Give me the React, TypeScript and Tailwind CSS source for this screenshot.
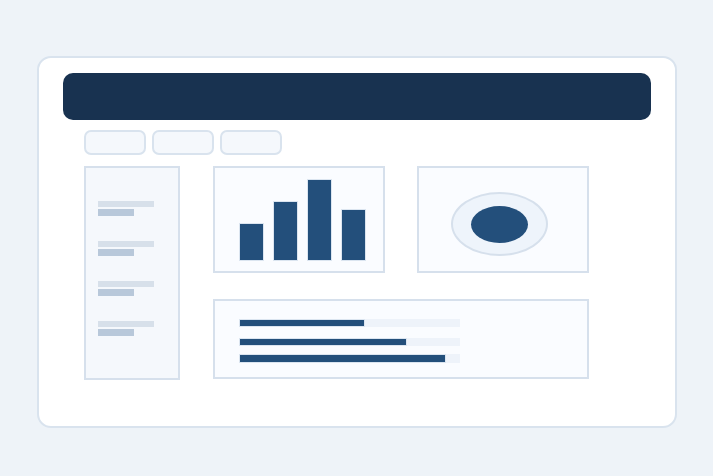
const bars = [38, 60, 82, 52];
const progress = [
  { fill: 126, h: 'h-[8px]', mt: 'mt-0' },
  { fill: 168, h: 'h-[8px]', mt: 'mt-[11px]' },
  { fill: 207, h: 'h-[9px]', mt: 'mt-[8px]' },
];

export default function App() {
  return (
    <div className="w-[713px] h-[476px] bg-[#eef3f8] pt-[56px] pl-[37px]">
      <div className="w-[640px] h-[372px] bg-white border-2 border-[#d9e3ee] rounded-[14px] px-[24px] pt-[15px]">
        {/* Header */}
        <div className="h-[47px] w-[588px] rounded-[10px] bg-[#183250]" />

        {/* Tabs */}
        <div className="mt-[10px] ml-[21px] flex gap-[6px]">
          {[0, 1, 2].map((i) => (
            <div key={i} className="w-[62px] h-[25px] rounded-[7px] bg-[#f5f8fc] border-2 border-[#d9e3ee]" />
          ))}
        </div>

        {/* Body */}
        <div className="mt-[11px] ml-[21px] flex gap-[33px]">
          {/* Sidebar */}
          <div className="w-[96px] h-[214px] bg-[#f5f8fc] border-2 border-[#d6e0ec] pt-[33px] pl-[12px] flex flex-col gap-[25px]">
            {[0, 1, 2, 3].map((i) => (
              <div key={i} className="flex flex-col gap-[2px]">
                <div className="w-[56px] h-[6px] bg-[#d7e0ea]" />
                <div className="w-[36px] h-[7px] bg-[#b8c8da]" />
              </div>
            ))}
          </div>

          <div className="flex flex-col gap-[26px]">
            <div className="flex gap-[32px]">
              {/* Bar chart */}
              <div className="w-[172px] h-[107px] bg-[#fafcff] border-2 border-[#d6e0ec] flex items-end gap-[9px] pl-[24px] pb-[10px]">
                {bars.map((h, i) => (
                  <div
                    key={i}
                    className="w-[25px] bg-[#234f7b] border border-[#dbe5f0]"
                    style={{ height: h }}
                  />
                ))}
              </div>

              {/* Donut */}
              <div className="w-[172px] h-[107px] bg-[#fafcff] border-2 border-[#d6e0ec] pl-[32px] pt-[24px]">
                <div className="w-[97px] h-[64px] rounded-[50%] bg-[#eef4fb] border-2 border-[#d6e0ec] flex items-center justify-center">
                  <div className="w-[57px] h-[37px] rounded-[50%] bg-[#234f7b]" />
                </div>
              </div>
            </div>

            {/* Progress */}
            <div className="w-[376px] h-[80px] bg-[#fafcff] border-2 border-[#d6e0ec] pl-[24px] pt-[18px]">
              {progress.map((p, i) => (
                <div key={i} className={`w-[221px] ${p.h} ${p.mt} bg-[#eef3fa]`}>
                  <div className="h-full bg-[#234f7b] border border-[#dbe5f0]" style={{ width: p.fill }} />
                </div>
              ))}
            </div>
          </div>
        </div>
      </div>
    </div>
  );
}
